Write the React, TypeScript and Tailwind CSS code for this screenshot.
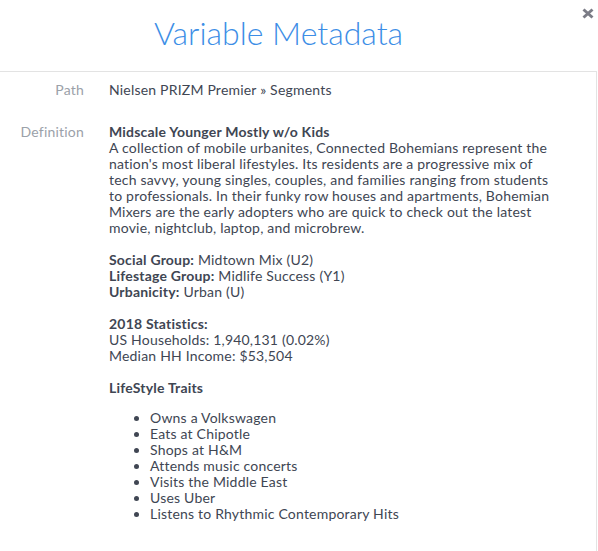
import React from "react";

const traits = [
  "Owns a Volkswagen",
  "Eats at Chipotle",
  "Shops at H&M",
  "Attends music concerts",
  "Visits the Middle East",
  "Uses Uber",
  "Listens to Rhythmic Contemporary Hits",
];

export default function App() {
  return (
    <div
      className="relative w-[598px] h-[551px] bg-white overflow-hidden text-[14px] leading-[16px] tracking-[0.2px] text-[#404653]"
      style={{ fontFamily: "Lato, 'Open Sans', sans-serif" }}
    >
      <div className="h-[71px] w-[597px] flex items-center justify-center pr-[40px] pb-[6px]">
        <h1 className="text-[32px] font-light text-[#3d8ee6] leading-none tracking-normal">Variable Metadata</h1>
      </div>
      <button className="absolute left-[582px] top-[8px]">
        <svg width="12" height="11" viewBox="0 0 12 11">
          <path d="M1.5 1.5 L10.5 9.5 M10.5 1.5 L1.5 9.5" stroke="#7b7c86" strokeWidth="3" strokeLinecap="butt" />
        </svg>
      </button>
      <div className="w-[597px] h-[480px] border-t border-r border-[#e3e3e3] pt-[10px]">
        <div className="grid grid-cols-[84px_1fr] gap-x-[25px] gap-y-[26px] pr-[46px]">
          <div className="text-right text-[#9ba1a9]">Path</div>
          <div>Nielsen PRIZM Premier » Segments</div>
          <div className="text-right text-[#9ba1a9]">Definition</div>
          <div>
            <div className="font-bold">Midscale Younger Mostly w/o Kids</div>
            <p>
              A collection of mobile urbanites, Connected Bohemians represent the nation's most liberal
              lifestyles. Its residents are a progressive mix of tech savvy, young singles, couples, and
              families ranging from students to professionals. In their funky row houses and apartments,
              Bohemian Mixers are the early adopters who are quick to check out the latest movie, nightclub,
              laptop, and microbrew.
            </p>
            <div className="mt-[16px]">
              <div>
                <span className="font-bold">Social Group:</span> Midtown Mix (U2)
              </div>
              <div>
                <span className="font-bold">Lifestage Group:</span> Midlife Success (Y1)
              </div>
              <div>
                <span className="font-bold">Urbanicity:</span> Urban (U)
              </div>
            </div>
            <div className="mt-[16px]">
              <div className="font-bold">2018 Statistics:</div>
              <div>US Households: 1,940,131 (0.02%)</div>
              <div>Median HH Income: $53,504</div>
            </div>
            <div className="mt-[16px] font-bold">LifeStyle Traits</div>
            <ul className="mt-[14px] list-disc pl-[41px]">
              {traits.map((t) => (
                <li key={t}>{t}</li>
              ))}
            </ul>
          </div>
        </div>
      </div>
    </div>
  );
}
